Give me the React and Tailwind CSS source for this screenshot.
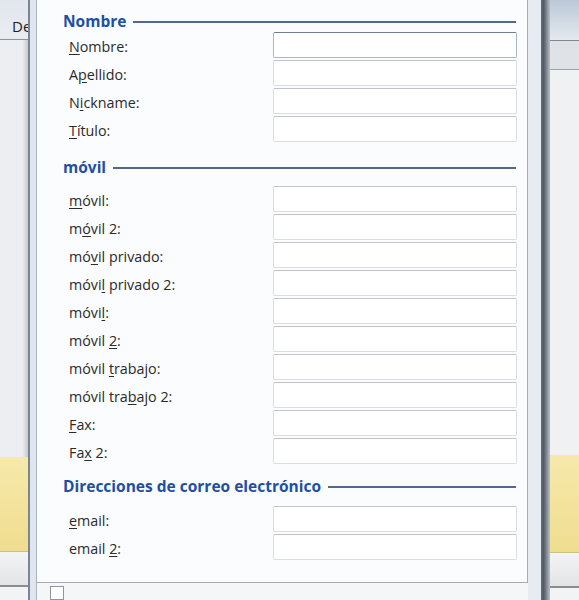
import React from 'react'

// label text with one underlined access-key letter, like a Windows dialog
function Label({ text, k }) {
  const before = text.slice(0, k)
  const key = text.slice(k, k + 1)
  const after = text.slice(k + 1)
  return (
    <span className="whitespace-pre">
      {before}
      <span className="underline underline-offset-2">{key}</span>
      {after}
    </span>
  )
}

function Heading({ title, className = '' }) {
  return (
    <div className={`flex items-center h-[20px] gap-[7px] pl-[26px] pr-[11px] ${className}`}>
      <span className="text-[15.5px] font-bold text-[#1f4fa3] leading-none">{title}</span>
      <div className="flex-1 h-[2px] bg-[#53698c]" />
    </div>
  )
}

function Row({ text, k, focused }) {
  return (
    <div className="flex items-center h-[26px] mb-[2px] pr-[10px]">
      <div className="w-[236px] pl-[32px] pt-[3px] text-[14.3px] text-[#2a2a2a]">
        <Label text={text} k={k} />
      </div>
      <div
        className={`flex-1 h-[26px] bg-white border rounded-[2px] ${
          focused
            ? 'border-[#a9b6c6] border-t-[#6f8096]'
            : 'border-[#dadde1] border-t-[#bfc3c8]'
        }`}
      />
    </div>
  )
}

const nombre = [
  { text: 'Nombre:', k: 0, focused: true },
  { text: 'Apellido:', k: 1 },
  { text: 'Nickname:', k: 1 },
  { text: 'Título:', k: 0 },
]

const movil = [
  { text: 'móvil:', k: 0 },
  { text: 'móvil 2:', k: 1 },
  { text: 'móvil privado:', k: 2 },
  { text: 'móvil privado 2:', k: 4 },
  { text: 'móvil:', k: 4 },
  { text: 'móvil 2:', k: 6 },
  { text: 'móvil trabajo:', k: 6 },
  { text: 'móvil trabajo 2:', k: 9 },
  { text: 'Fax:', k: 0 },
  { text: 'Fax 2:', k: 2 },
]

const correo = [
  { text: 'email:', k: 0 },
  { text: 'email 2:', k: 6 },
]

export default function App() {
  return (
    <div
      className="w-[579px] h-[600px] flex overflow-hidden bg-[#eef0f2]"
      style={{ fontFamily: '"Open Sans", "Noto Sans", sans-serif' }}
    >
      {/* background app, left side */}
      <div className="w-[28px] flex flex-col shrink-0">
        <div className="h-[40px] bg-gradient-to-b from-[#e2e7ee] to-[#e9edf1] border-b border-[#8d9399] relative overflow-hidden">
          <span className="absolute left-[12px] top-[19px] text-[15px] text-[#202020] leading-none">De</span>
        </div>
        <div className="h-[417px] bg-gradient-to-r from-[#eceef1] from-80% to-[#c4c9ce]" />
        <div className="h-[95px] bg-gradient-to-b from-[#f6e9ab] to-[#efdd8f] border-b border-[#cdbf7f]" />
        <div className="h-[35px] bg-gradient-to-b from-[#f3f4f5] to-[#e2e4e6] border-b-2 border-[#8a8e93]" />
        <div className="flex-1 bg-[#f2f3f4]" />
      </div>

      {/* dialog frame */}
      <div className="w-[522px] shrink-0 flex">
        <div className="w-[9px] border-l-2 border-[#7b858f] border-r border-r-[#aab4bf] bg-[#dfe6ee]" />

        {/* content panel */}
        <div className="flex-1 flex flex-col">
          <div className="h-[592px] bg-[#fbfcfd] border-r border-b border-[#a4acb5] pt-[12px]">
            <Heading title="Nombre" />
            {nombre.map((r, i) => (
              <Row key={i} {...r} />
            ))}

            <Heading title="móvil" className="mt-[16px] mb-[8px]" />
            {movil.map((r, i) => (
              <Row key={i} {...r} />
            ))}

            <Heading title="Direcciones de correo electrónico" className="mt-[13px] mb-[9px]" />
            {correo.map((r, i) => (
              <Row key={i} {...r} />
            ))}
          </div>
          <div className="flex-1 bg-[#f4f6f8] pl-[13px] pt-[3px]">
            <div className="w-[14px] h-[14px] border border-[#8e959c] bg-white" />
          </div>
        </div>

        <div className="w-[15px] bg-[#e6ecf2] border-r-2 border-[#5e6670]" />
        <div className="w-[7px] bg-gradient-to-r from-[#4a525b] to-[#b9c0c8]" />
      </div>

      {/* background app, right side */}
      <div className="flex-1 flex flex-col">
        <div className="h-[41px] bg-gradient-to-b from-[#bcc8d8] to-[#e4e9ef] border-b border-[#7e8690]" />
        <div className="h-[29px] bg-[#dfe2e6] border-b border-[#9da3aa]" />
        <div className="h-[385px] bg-[#eff1f3]" />
        <div className="h-[98px] bg-gradient-to-b from-[#f6e9ab] to-[#efdd8f] border-b border-[#cdbf7f]" />
        <div className="h-[35px] bg-gradient-to-b from-[#f3f4f5] to-[#e2e4e6] border-b-2 border-[#8a8e93]" />
        <div className="flex-1 bg-[#f2f3f4]" />
      </div>
    </div>
  )
}
